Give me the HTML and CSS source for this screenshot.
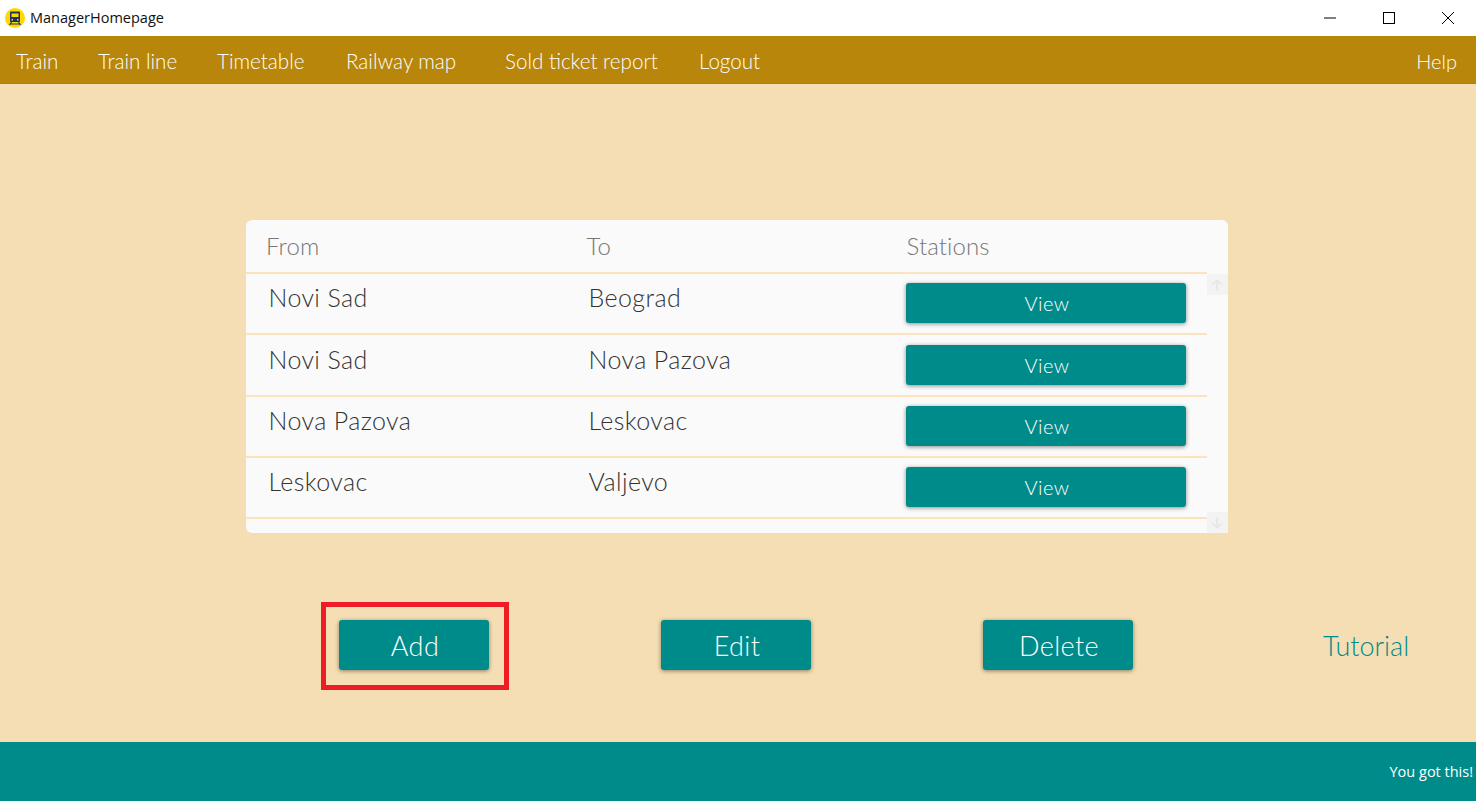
FILE: index.html
```html
<!DOCTYPE html>
<html lang="en">
<head>
  <meta charset="UTF-8" />
  <title>ManagerHomepage</title>
  <link rel="stylesheet" href="styles.css">
</head>
<body>
  <div class="titlebar">
    <svg class="app-icon" width="20" height="20" viewBox="0 0 20 20">
      <circle cx="10" cy="10" r="10" fill="#ffd800"/>
      <path d="M6 3.5h8a1 1 0 0 1 1 1v8.5a1 1 0 0 1-1 1H6a1 1 0 0 1-1-1V4.500a1 1 0 0 1 1-1z" fill="#1d3461"/>
      <rect x="6.500" y="5.500" width="7" height="3.500" fill="#ffd800"/>
      <rect x="6.500" y="11" width="1.500" height="1.500" fill="#ffd800"/>
      <rect x="12" y="11" width="1.500" height="1.500" fill="#ffd800"/>
      <path d="M6.500 14l-2 3M13.500 14l2 3M5 16h10" stroke="#1d3461" stroke-width="1.200" fill="none"/>
    </svg>
    <span class="app-title">ManagerHomepage</span>
    <div class="window-controls">
      <svg width="12" height="12" viewBox="0 0 12 12"><path d="M0 6h12" stroke="#000" fill="none"/></svg>
      <svg width="12" height="12" viewBox="0 0 12 12"><rect x="0.500" y="0.500" width="11" height="11" stroke="#000" fill="none"/></svg>
      <svg width="12" height="12" viewBox="0 0 12 12"><path d="M0 0l12 12M12 0L0 12" stroke="#000" fill="none"/></svg>
    </div>
  </div>

  <nav class="menu">
    <a>Train</a>
    <a>Train line</a>
    <a>Timetable</a>
    <a>Railway map</a>
    <a>Sold ticket report</a>
    <a>Logout</a>
    <a class="help">Help</a>
  </nav>

  <main class="content">
    <div class="card">
      <div class="table">
        <div class="row head">
          <span>From</span>
          <span>To</span>
          <span>Stations</span>
        </div>
        <div class="row">
          <span>Novi Sad</span>
          <span>Beograd</span>
          <button class="view">View</button>
        </div>
        <div class="row">
          <span>Novi Sad</span>
          <span>Nova Pazova</span>
          <button class="view">View</button>
        </div>
        <div class="row">
          <span>Nova Pazova</span>
          <span>Leskovac</span>
          <button class="view">View</button>
        </div>
        <div class="row">
          <span>Leskovac</span>
          <span>Valjevo</span>
          <button class="view">View</button>
        </div>
      </div>
      <div class="scrollbar">
        <div class="scroll-btn">
          <svg width="14" height="14" viewBox="0 0 12 12"><path d="M6 11V2M2 6l4-4 4 4" stroke="#e6e6e6" stroke-width="1.500" fill="none"/></svg>
        </div>
        <div class="scroll-btn">
          <svg width="14" height="14" viewBox="0 0 12 12"><path d="M6 1v9M2 6l4 4 4-4" stroke="#e6e6e6" stroke-width="1.500" fill="none"/></svg>
        </div>
      </div>
    </div>

    <div class="actions">
      <div class="highlight"><button class="action">Add</button></div>
      <button class="action">Edit</button>
      <button class="action">Delete</button>
      <a class="tutorial">Tutorial</a>
    </div>
  </main>

  <footer class="status">You got this!</footer>
</body>
</html>
```

FILE: styles.css
```css
* {
  box-sizing: border-box;
}

html, body {
  height: 100%;
}

body {
  margin: 0;
  display: flex;
  flex-direction: column;
  overflow: hidden;
  background-color: #f5deb3;
  font-family: Lato, "Open Sans", sans-serif;
}

.titlebar {
  height: 36px;
  display: flex;
  align-items: center;
  background: white;
  padding-left: 5px;
}

.app-title {
  margin-left: 5px;
  padding-bottom: 2px;
  font-family: "Open Sans", sans-serif;
  font-size: 14.500px;
  color: #111;
}

.window-controls {
  margin-left: auto;
  display: flex;
  gap: 47px;
  padding-right: 22px;
}

.menu {
  height: 48px;
  display: grid;
  grid-template-columns: 82px 119px 129px 159px 194px 1fr auto;
  align-items: center;
  padding: 2px 19px 0 16px;
  background-color: #b8860b;
  border-bottom: 1px solid #ad7f0c;
  color: white;
  font-size: 20.600px;
  font-weight: 300;
}

.help {
  font-size: 20px;
}

.content {
  flex: 1;
  padding-top: 136px;
}

.card {
  width: 982px;
  height: 313px;
  margin-left: 246px;
  display: flex;
  background: #fafafa;
  border-radius: 6px;
}

.table {
  width: 961px;
}

.row {
  height: 61.300px;
  display: grid;
  grid-template-columns: 320px 317px 280px;
  padding: 9.300px 0 0 22.500px;
  border-bottom: 2px solid #fae3bd;
  color: #333;
  font-size: 25px;
  font-weight: 300;
  letter-spacing: 0.4px;
  line-height: 28px;
}

.row.head {
  height: 54px;
  grid-template-columns: 320.500px 320px 280px;
  padding: 12px 0 0 20px;
  color: #777;
  font-size: 24px;
  letter-spacing: 0.1px;
}

.view {
  width: 280px;
  height: 40px;
  padding: 0 0 0 3px;
  border: none;
  border-radius: 3px;
  background-color: #008b8b;
  color: white;
  font-family: inherit;
  font-size: 20px;
  font-weight: 300;
  letter-spacing: 0.4px;
  box-shadow: 0 1px 4px rgba(0, 0, 0, 0.45);
}

.scrollbar {
  width: 21px;
  padding-top: 54px;
  display: flex;
  flex-direction: column;
  justify-content: space-between;
}

.scroll-btn {
  height: 21px;
  display: flex;
  align-items: center;
  justify-content: center;
  padding-right: 2px;
  background: #f3f3f3;
}

.actions {
  display: flex;
  align-items: center;
  gap: 172px;
  padding-left: 339px;
  margin-top: 87px;
}

.highlight {
  position: relative;
  display: flex;
}

.highlight::after {
  content: "";
  position: absolute;
  inset: -18px -20px -20px -18px;
  border: 5px solid #ee1c25;
}

.action {
  width: 150px;
  height: 50px;
  padding: 0 0 0 2px;
  border: none;
  border-radius: 3px;
  background-color: #008b8b;
  color: white;
  font-family: inherit;
  font-size: 27px;
  font-weight: 300;
  letter-spacing: 0.4px;
  box-shadow: 0 1px 4px rgba(0, 0, 0, 0.45);
}

.tutorial {
  margin-left: 18px;
  color: #008b8b;
  font-size: 27px;
  font-weight: 300;
}

.status {
  height: 59px;
  display: flex;
  align-items: center;
  justify-content: flex-end;
  padding-right: 3px;
  background-color: #008b8b;
  color: white;
  font-family: "Open Sans", sans-serif;
  font-size: 14.500px;
}
```
